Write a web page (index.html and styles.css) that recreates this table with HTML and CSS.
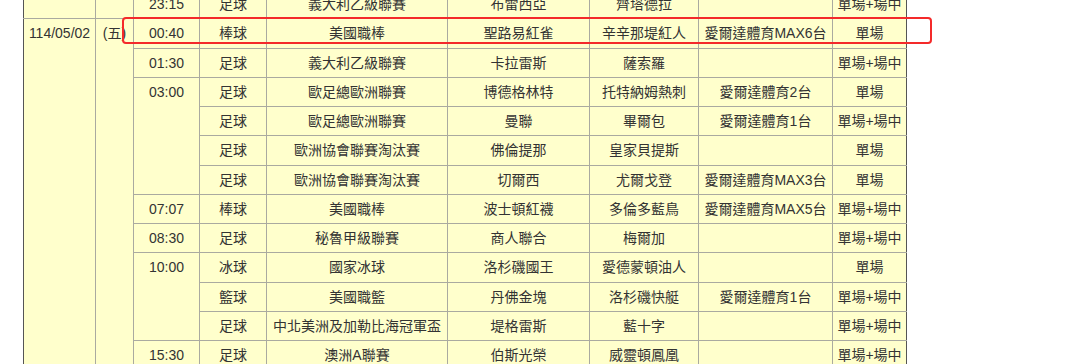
FILE: index.html
```html
<!DOCTYPE html>
<html lang="zh-Hant">
<head>
<meta charset="utf-8">
<title>賽事表</title>
<link rel="stylesheet" href="styles.css">
</head>
<body>
<div class="page">
  <table class="schedule">
    <colgroup>
      <col class="c-date"><col class="c-day"><col class="c-time"><col class="c-sport"><col class="c-league"><col class="c-home"><col class="c-away"><col class="c-tv"><col class="c-type">
    </colgroup>
    <tbody>
      <tr>
        <td></td><td></td><td>23:15</td><td>足球</td><td>義大利乙級聯賽</td><td>布雷西亞</td><td>齊塔德拉</td><td></td><td>單場+場中</td>
      </tr>
      <tr>
        <td rowspan="12">114/05/02</td><td rowspan="12">(五)</td><td>00:40</td><td>棒球</td><td>美國職棒</td><td>聖路易紅雀</td><td>辛辛那堤紅人</td><td>愛爾達體育MAX6台</td><td>單場</td>
      </tr>
      <tr>
        <td>01:30</td><td>足球</td><td>義大利乙級聯賽</td><td>卡拉雷斯</td><td>薩索羅</td><td></td><td>單場+場中</td>
      </tr>
      <tr>
        <td rowspan="4">03:00</td><td>足球</td><td>歐足總歐洲聯賽</td><td>博德格林特</td><td>托特納姆熱刺</td><td>愛爾達體育2台</td><td>單場</td>
      </tr>
      <tr>
        <td>足球</td><td>歐足總歐洲聯賽</td><td>曼聯</td><td>畢爾包</td><td>愛爾達體育1台</td><td>單場+場中</td>
      </tr>
      <tr>
        <td>足球</td><td>歐洲協會聯賽淘汰賽</td><td>佛倫提那</td><td>皇家貝提斯</td><td></td><td>單場</td>
      </tr>
      <tr>
        <td>足球</td><td>歐洲協會聯賽淘汰賽</td><td>切爾西</td><td>尤爾戈登</td><td>愛爾達體育MAX3台</td><td>單場</td>
      </tr>
      <tr>
        <td>07:07</td><td>棒球</td><td>美國職棒</td><td>波士頓紅襪</td><td>多倫多藍鳥</td><td>愛爾達體育MAX5台</td><td>單場+場中</td>
      </tr>
      <tr>
        <td>08:30</td><td>足球</td><td>秘魯甲級聯賽</td><td>商人聯合</td><td>梅爾加</td><td></td><td>單場+場中</td>
      </tr>
      <tr>
        <td rowspan="3">10:00</td><td>冰球</td><td>國家冰球</td><td>洛杉磯國王</td><td>愛德蒙頓油人</td><td></td><td>單場</td>
      </tr>
      <tr>
        <td>籃球</td><td>美國職籃</td><td>丹佛金塊</td><td>洛杉磯快艇</td><td>愛爾達體育1台</td><td>單場+場中</td>
      </tr>
      <tr>
        <td>足球</td><td>中北美洲及加勒比海冠軍盃</td><td>堤格雷斯</td><td>藍十字</td><td></td><td>單場+場中</td>
      </tr>
      <tr>
        <td>15:30</td><td>足球</td><td>澳洲A聯賽</td><td>伯斯光榮</td><td>威靈頓鳳凰</td><td></td><td>單場+場中</td>
      </tr>
    </tbody>
  </table>
  <div class="highlight"></div>
</div>
</body>
</html>
```

FILE: styles.css
```css
html, body {
  margin: 0;
  padding: 0;
  background: #ffffff;
  overflow: hidden;
}

.page {
  position: relative;
  padding-left: 23px;
  height: 364px;
  overflow: hidden;
}

.schedule {
  margin-top: -11px;
  width: 884px;
  table-layout: fixed;
  border-collapse: collapse;
  background: #ffffcc;
  border-left: 1px solid #555555;
  border-right: 1px solid #555555;
  font-family: "Liberation Sans", "Noto Sans CJK TC", sans-serif;
  font-size: 14px;
  color: #333333;
}

.c-date { width: 72px; }
.c-day { width: 38px; }
.c-time { width: 66px; }
.c-sport { width: 67px; }
.c-league { width: 181px; }
.c-home { width: 142px; }
.c-away { width: 109px; }
.c-tv { width: 134px; }
.c-type { width: 74px; }

.schedule td {
  height: 28.25px;
  padding: 0;
  line-height: 28px;
  text-align: center;
  vertical-align: top;
  white-space: nowrap;
  overflow: hidden;
  border: 1px solid #aaaaa0;
}

.schedule td:first-child {
  border-left: 1px solid #555555;
}

.schedule td:last-child {
  border-right: 1px solid #555555;
}

.highlight {
  position: absolute;
  left: 122px;
  top: 17px;
  width: 806px;
  height: 23px;
  border: 2.5px solid #f42a2a;
  border-radius: 4px;
  pointer-events: none;
}
```
